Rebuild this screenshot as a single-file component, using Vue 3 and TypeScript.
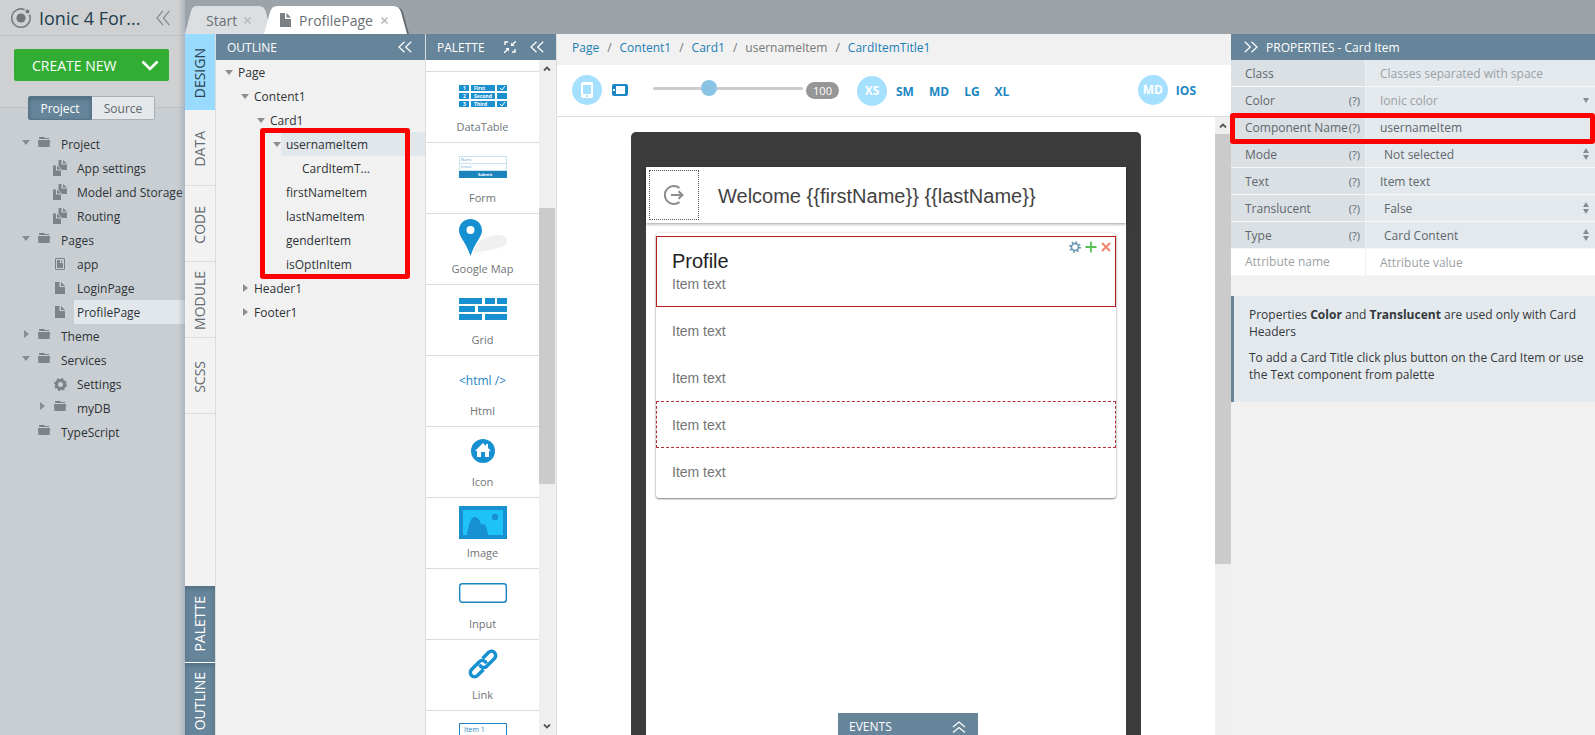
<script setup lang="ts">
import { ref } from 'vue'

interface TreeRow {
  label: string
  level: number
  arrow?: 'open' | 'closed'
  icon?: 'folder' | 'module' | 'app' | 'page' | 'gear'
  active?: boolean
}

interface Property {
  id: string
  label: string
  kind: 'text' | 'combo' | 'select'
  value?: string
  placeholder?: string
  help: boolean
  marked?: boolean
}

const mode = ref<'project' | 'source'>('project')
const zoom = ref(36)

const projectTree: TreeRow[] = [
  { label: 'Project', level: 0, arrow: 'open', icon: 'folder' },
  { label: 'App settings', level: 1, icon: 'module' },
  { label: 'Model and Storage', level: 1, icon: 'module' },
  { label: 'Routing', level: 1, icon: 'module' },
  { label: 'Pages', level: 0, arrow: 'open', icon: 'folder' },
  { label: 'app', level: 1, icon: 'app' },
  { label: 'LoginPage', level: 1, icon: 'page' },
  { label: 'ProfilePage', level: 1, icon: 'page', active: true },
  { label: 'Theme', level: 0, arrow: 'closed', icon: 'folder' },
  { label: 'Services', level: 0, arrow: 'open', icon: 'folder' },
  { label: 'Settings', level: 1, icon: 'gear' },
  { label: 'myDB', level: 1, arrow: 'closed', icon: 'folder' },
  { label: 'TypeScript', level: 0, icon: 'folder' },
]

const outlineTree: TreeRow[] = [
  { label: 'Page', level: 0, arrow: 'open' },
  { label: 'Content1', level: 1, arrow: 'open' },
  { label: 'Card1', level: 2, arrow: 'open' },
  { label: 'usernameItem', level: 3, arrow: 'open', active: true },
  { label: 'CardItemT...', level: 4 },
  { label: 'firstNameItem', level: 3 },
  { label: 'lastNameItem', level: 3 },
  { label: 'genderItem', level: 3 },
  { label: 'isOptInItem', level: 3 },
  { label: 'Header1', level: 1, arrow: 'closed' },
  { label: 'Footer1', level: 1, arrow: 'closed' },
]

const views = ['DESIGN', 'DATA', 'CODE', 'MODULE', 'SCSS']
const docks = ['PALETTE', 'OUTLINE']
const palette = ['DataTable', 'Form', 'Google Map', 'Grid', 'Html', 'Icon', 'Image', 'Input', 'Link', 'List']
const crumbs = ['Page', 'Content1', 'Card1', 'usernameItem', 'CardItemTitle1']
const sizes = ['XS', 'SM', 'MD', 'LG', 'XL']
const itemKinds = ['selected', '', '', 'hovered', '']

const properties: Property[] = [
  { id: 'class', label: 'Class', kind: 'text', placeholder: 'Classes separated with space', help: false },
  { id: 'color', label: 'Color', kind: 'combo', placeholder: 'Ionic color', help: true },
  { id: 'name', label: 'Component Name', kind: 'text', value: 'usernameItem', help: true, marked: true },
  { id: 'mode', label: 'Mode', kind: 'select', value: 'Not selected', help: true },
  { id: 'text', label: 'Text', kind: 'text', value: 'Item text', help: true },
  { id: 'translucent', label: 'Translucent', kind: 'select', value: 'False', help: true },
  { id: 'type', label: 'Type', kind: 'select', value: 'Card Content', help: true },
]
</script>

<template>
  <div class="ide">
    <aside class="sidebar">
      <header class="app-head">
        <svg class="logo" width="20" height="20" viewBox="0 0 20 20">
          <circle cx="10" cy="10" r="4.6" fill="#71767a" />
          <path d="M13.6 1.7A9.2 9.2 0 1 0 18.4 6.6" fill="none" stroke="#7a7f83" stroke-width="1.6" />
          <circle cx="16.4" cy="3.4" r="1.9" fill="#71767a" />
        </svg>
        <h1>Ionic 4 For...</h1>
        <button class="icon-btn" aria-label="Collapse project panel">
          <svg width="14" height="16" viewBox="0 0 14 16"><path d="M7 .8L1 8l6 7.200M13.400.8L7.400 8l6 7.200" fill="none" stroke="#85898c" stroke-width="1.200" /></svg>
        </button>
      </header>
      <div class="create-area">
        <button class="create">
          <span>CREATE NEW</span>
          <svg width="18" height="12" viewBox="0 0 18 12"><path d="M1.500 1.500L9 9l7.500-7.500" fill="none" stroke="#fff" stroke-width="2.600" /></svg>
        </button>
      </div>
      <div class="switch">
        <button :class="{ on: mode === 'project' }" @click="mode = 'project'">Project</button>
        <button :class="{ on: mode === 'source' }" @click="mode = 'source'">Source</button>
      </div>
      <ul class="tree project-tree">
        <li v-for="row in projectTree" :key="row.label" :class="'level-' + row.level">
          <span class="twisty">
            <svg v-if="row.arrow === 'open'" width="8" height="5" viewBox="0 0 8 5"><path d="M0 0h8L4 5z" fill="#888e93" /></svg>
            <svg v-else-if="row.arrow" width="5" height="8" viewBox="0 0 5 8"><path d="M0 0v8l5-4z" fill="#888e93" /></svg>
          </span>
          <span class="glyph">
            <svg v-if="row.icon === 'folder'" class="folder" width="12" height="10" viewBox="0 0 12 10"><path d="M1 1V0h5l1 1h4v1H1zM0 3h12v1l-.4 6H.4L0 4z" fill="#7d8388" /></svg>
            <svg v-else-if="row.icon === 'module'" width="15" height="16" viewBox="0 0 15 16"><path d="M0 5.500h3v5h5V16H0zM4 5.500L8 9.500H4zM5.500 0H8.500v4.500H14V10H9L5.500 6zM10 0l4 3.500h-4z" fill="#7d8388" /></svg>
            <svg v-else-if="row.icon === 'app'" width="10" height="12" viewBox="0 0 10 12"><path d="M.5.5h9v11h-9z" fill="none" stroke="#7d8388" /><path d="M2 2h3v3h3v5H2zM6 2l2 2H6z" fill="#7d8388" /></svg>
            <svg v-else-if="row.icon === 'page'" width="10" height="12" viewBox="0 0 10 12"><path d="M0 0h4.500v5H10v7H0zM6 0l4 4H6z" fill="#7d8388" /></svg>
            <svg v-else width="13" height="13" viewBox="0 0 13 13"><circle cx="6.500" cy="6.500" r="4" fill="none" stroke="#7d8388" stroke-width="3" /><circle cx="6.500" cy="6.500" r="5.600" fill="none" stroke="#7d8388" stroke-width="1.800" stroke-dasharray="2.200 2.200" /></svg>
          </span>
          <a href="#" class="node" :class="{ active: row.active }">{{ row.label }}</a>
        </li>
      </ul>
    </aside>

    <div class="workspace">
      <nav class="tabs">
        <div class="tab start">
          <svg class="shape" width="86" height="28" viewBox="0 0 86 28"><path d="M0 28L6 5Q7.500 0 12 0h62q5 0 7 6l5 22z" fill="#dbdfe2" /></svg>
          <span>Start</span><button class="close" aria-label="Close Start"><svg width="7" height="7" viewBox="0 0 7 7"><path d="M.5.5l6 6M6.500.5l-6 6" stroke="#b3b8bc" stroke-width="1.500" /></svg></button>
        </div>
        <div class="tab current">
          <svg class="shape" width="148" height="28" viewBox="0 0 148 28"><path d="M131 0q6 1 8 6l6 22h-2L131 2z" fill="#686d71" /><path d="M0 28L6 6Q8 0 13 0h117q5 0 7 6l6 22z" fill="#fff" /></svg>
          <svg width="11" height="14" viewBox="0 0 11 14"><path d="M0 0h5v6h6v8H0zM6.500 0L11 4.500H6.500z" fill="#7b8084" /></svg>
          <span>ProfilePage</span><button class="close" aria-label="Close ProfilePage"><svg width="7" height="7" viewBox="0 0 7 7"><path d="M.5.5l6 6M6.500.5l-6 6" stroke="#b3b8bc" stroke-width="1.500" /></svg></button>
        </div>
      </nav>

      <div class="panels">
        <nav class="rail">
          <button v-for="(view, i) in views" :key="view" :class="{ current: i === 0 }"><span>{{ view }}</span></button>
          <div class="docks">
            <button v-for="dock in docks" :key="dock" class="dock"><span>{{ dock }}</span></button>
          </div>
        </nav>

        <section class="outline">
          <header class="panel-head">
            <h2>OUTLINE</h2>
            <button class="icon-btn" aria-label="Collapse outline"><svg width="14" height="12" viewBox="0 0 14 12"><path d="M6.500.7L1 6l5.500 5.300M13.200.7L7.700 6l5.500 5.300" fill="none" stroke="#fff" stroke-width="1.200" /></svg></button>
          </header>
          <ul class="tree outline-tree">
            <li v-for="row in outlineTree" :key="row.label" :class="'level-' + row.level">
              <span class="twisty">
                <svg v-if="row.arrow === 'open'" width="8" height="5" viewBox="0 0 8 5"><path d="M0 0h8L4 5z" fill="#8b8f92" /></svg>
                <svg v-else-if="row.arrow" width="5" height="8" viewBox="0 0 5 8"><path d="M0 0v8l5-4z" fill="#8b8f92" /></svg>
              </span>
              <a href="#" class="node" :class="{ active: row.active }">{{ row.label }}</a>
            </li>
          </ul>
          <div class="callout"></div>
        </section>

        <section class="palette">
          <header class="panel-head">
            <h2>PALETTE</h2>
            <button class="icon-btn" aria-label="Compact view"><svg width="12" height="12" viewBox="0 0 12 12"><path d="M1 4V1h3M8 11h3V8" fill="none" stroke="#fff" stroke-width="1.400" /><path d="M0 12l4-4M12 0L8 4" stroke="#fff" stroke-width="1.400" /><path d="M1.500 7H5v3.500zM7 1.500V5h3.500z" fill="#fff" /></svg></button>
            <button class="icon-btn" aria-label="Collapse palette"><svg width="14" height="12" viewBox="0 0 14 12"><path d="M6.500.7L1 6l5.500 5.300M13.200.7L7.700 6l5.500 5.300" fill="none" stroke="#fff" stroke-width="1.200" /></svg></button>
          </header>
          <div class="palette-body">
            <ul class="palette-list">
              <li v-for="name in palette" :key="name">
                <svg v-if="name === 'DataTable'" width="48" height="48" viewBox="0 0 48 48">
                  <path d="M0 13h10v6H0zm12 0h24v6H12zm26 0h10v6H38zM0 21h10v6H0zm12 0h24v6H12zm26 0h10v6H38zM0 29h10v6H0zm12 0h24v6H12zm26 0h10v6H38z" fill="#1b90cf" />
                  <g fill="#fff" font-size="5" font-weight="700"><text x="4" y="18">1</text><text x="4" y="26">2</text><text x="4" y="34">3</text><text x="15" y="18">First</text><text x="15" y="26">Second</text><text x="15" y="34">Third</text></g>
                  <path d="M41 16l2 2 3-4M41 32l2 2 3-4" fill="none" stroke="#fff" />
                </svg>
                <svg v-else-if="name === 'Form'" width="48" height="48" viewBox="0 0 48 48">
                  <path d="M.5 13.500h47v14H.5zM0 20.500h48" fill="none" stroke="#c5e2f2" /><path d="M0 28h48v7H0z" fill="#1b84bd" />
                  <g fill="#6caed3" font-size="4"><text x="2" y="18">Name</text><text x="2" y="25">Email</text></g><text x="19" y="33" fill="#fff" font-size="4" font-weight="700">Submit</text>
                </svg>
                <svg v-else-if="name === 'Google Map'" width="48" height="48" viewBox="0 0 48 48">
                  <path d="M14 39q4-15 22-18c8-1 12 2 12 6 0 5-5 7-12 8z" fill="#f0f0f0" /><path d="M11.500 5C5 5 0 10 0 16.500 0 23 7 28 11.500 42 16 28 23 23 23 16.500 23 10 18 5 11.500 5zm0 7a4 4 0 1 1 0 8 4 4 0 0 1 0-8z" fill="#1790d2" />
                </svg>
                <svg v-else-if="name === 'Grid'" width="48" height="48" viewBox="0 0 48 48"><path d="M0 13h23v6H0zm26 0h10v6H26zm12 0h10v6H38zM0 21h16v6H0zm19 0h29v6H19zM0 29h23v6H0zm26 0h22v6H26z" fill="#1790d2" /></svg>
                <span v-else-if="name === 'Html'" class="html-mark">&lt;html /&gt;</span>
                <svg v-else-if="name === 'Icon'" width="48" height="48" viewBox="0 0 48 48"><circle cx="24" cy="24" r="12" fill="#1790d2" /><path d="M24 16l-8 8h2v6h4v-5h4v5h4v-6h2l-3-3v-4h-2v2z" fill="#fff" /></svg>
                <svg v-else-if="name === 'Image'" width="48" height="48" viewBox="0 0 48 48"><path d="M0 8h48v33H0z" fill="#1790d2" /><path d="M4 12h40v25H4z" fill="#1fc2f7" /><path d="M8 37c2-12 4-18 8-18 3 0 5 3 6 8 3-3 6 0 7 10z" fill="#1790d2" /><circle cx="36" cy="19" r="3.200" fill="#1790d2" /></svg>
                <svg v-else-if="name === 'Input'" width="48" height="48" viewBox="0 0 48 48"><rect x=".7" y="14.700" width="46.600" height="18.600" rx="2.500" fill="none" stroke="#1b84c2" stroke-width="1.400" /></svg>
                <svg v-else-if="name === 'Link'" width="48" height="48" viewBox="0 0 48 48"><g fill="none" stroke="#1790d2" stroke-width="3.400" transform="rotate(-45 24 24)"><path d="M20.500 28.200H12a4.200 4.200 0 0 1 0-8.400H23a4.200 4.200 0 0 1 3.800 6.200" /><path d="M27.500 19.800h8.500a4.200 4.200 0 0 1 0 8.400H25a4.200 4.200 0 0 1-3.800-6.200" /></g></svg>
                <svg v-else width="48" height="48" viewBox="0 0 48 48"><path d="M.5 12.500h47v35H.5zM0 24.500h48" fill="none" stroke="#1b84c2" /><text x="5" y="21" fill="#1b84c2" font-size="7">Item 1</text></svg>
                <span class="palette-name">{{ name }}</span>
              </li>
            </ul>
            <div class="scrollbar palette-scroll">
              <svg width="8" height="5" viewBox="0 0 8 5"><path d="M1 4.500l3-3 3 3" fill="none" stroke="#555" stroke-width="1.800" /></svg>
              <div class="track"><i></i></div>
              <svg width="8" height="5" viewBox="0 0 8 5"><path d="M1 .5l3 3 3-3" fill="none" stroke="#555" stroke-width="1.800" /></svg>
            </div>
          </div>
        </section>

        <main class="canvas">
          <nav class="crumbs">
            <template v-for="(crumb, i) in crumbs" :key="crumb">
              <span v-if="i > 0" class="sep">/</span>
              <span v-if="crumb === 'usernameItem'" class="here">{{ crumb }}</span>
              <a v-else href="#">{{ crumb }}</a>
            </template>
          </nav>
          <div class="toolbar">
            <button class="round" aria-label="Portrait"><svg width="12" height="16" viewBox="0 0 12 16"><path d="M2 0h8q2 0 2 2v12q0 2-2 2H2q-2 0-2-2V2q0-2 2-2zm0 3v9h8V3zM5 13v2h2v-2z" fill="#fff" fill-rule="evenodd" /></svg></button>
            <button class="icon-btn landscape" aria-label="Landscape"><svg width="16" height="12" viewBox="0 0 16 12"><path d="M2 0h12q2 0 2 2v8q0 2-2 2H2q-2 0-2-2V2q0-2 2-2zm2 2v8h9V2zM1 5v2h2V5z" fill="#1b86c6" fill-rule="evenodd" /></svg></button>
            <input v-model="zoom" class="zoom" type="range" min="0" max="100" aria-label="Zoom" />
            <span class="badge">100</span>
            <div class="sizes">
              <button v-for="(size, i) in sizes" :key="size" :class="i === 0 ? 'round' : 'plain'">{{ size }}</button>
            </div>
            <div class="platforms">
              <button class="round">MD</button><button class="plain">IOS</button>
            </div>
          </div>
          <div class="stage">
            <div class="viewport">
              <div class="device">
                <div class="screen">
                  <header class="page-head">
                    <button class="logout" aria-label="Log out"><svg width="20" height="20" viewBox="0 0 20 20"><path d="M15.500 3A9 9 0 1 0 15.500 17M7 10h11M14.500 6.300L18.500 10l-4 3.700" fill="none" stroke="#8c8c8c" stroke-width="2" /></svg></button>
                    <h3 v-pre>Welcome {{firstName}} {{lastName}}</h3>
                  </header>
                  <div class="card">
                    <div v-for="(kind, i) in itemKinds" :key="i" class="item" :class="kind">
                      <h4 v-if="i === 0">Profile</h4>
                      <p>Item text</p>
                      <div v-if="i === 0" class="item-tools">
                        <button class="icon-btn" aria-label="Settings"><svg width="12" height="12" viewBox="0 0 12 12"><circle cx="6" cy="6" r="3.500" fill="none" stroke="#5f8fae" stroke-width="1.500" /><circle cx="6" cy="6" r="5" fill="none" stroke="#5f8fae" stroke-width="1.800" stroke-dasharray="1.500 2.430" /></svg></button>
                        <button class="icon-btn" aria-label="Add"><svg width="12" height="12" viewBox="0 0 12 12"><path d="M6 .5v11M.5 6h11" stroke="#55c155" stroke-width="1.800" /></svg></button>
                        <button class="icon-btn" aria-label="Remove"><svg width="10" height="10" viewBox="0 0 10 10"><path d="M1 1l8 8M9 1L1 9" stroke="#f0866b" stroke-width="2" /></svg></button>
                      </div>
                    </div>
                  </div>
                </div>
              </div>
            </div>
            <div class="scrollbar stage-scroll">
              <svg width="8" height="5" viewBox="0 0 8 5"><path d="M1 4.500l3-3 3 3" fill="none" stroke="#555" stroke-width="1.800" /></svg>
              <div class="track"><i></i></div>
            </div>
          </div>
          <button class="events"><span>EVENTS</span><svg width="14" height="12" viewBox="0 0 14 12"><path d="M1 6l6-5 6 5M1 11.500l6-5 6 5" fill="none" stroke="#fff" stroke-width="1.200" /></svg></button>
        </main>

        <section class="properties">
          <header class="panel-head">
            <button class="icon-btn" aria-label="Collapse properties"><svg width="14" height="12" viewBox="0 0 14 12"><path d="M.8.7L6.300 6 .8 11.300M7.500.7L13 6l-5.500 5.300" fill="none" stroke="#fff" stroke-width="1.200" /></svg></button>
            <h2>PROPERTIES - Card Item</h2>
          </header>
          <div v-for="prop in properties" :key="prop.id" class="prop" :class="{ marked: prop.marked }">
            <div class="key"><label :for="prop.id">{{ prop.label }}</label><span v-if="prop.help" class="help">(?)</span></div>
            <div class="value">
              <select v-if="prop.kind === 'select'" :id="prop.id"><option>{{ prop.value }}</option></select>
              <input v-else :id="prop.id" type="text" :value="prop.value" :placeholder="prop.placeholder" />
              <svg v-if="prop.kind === 'select'" width="6" height="12" viewBox="0 0 6 12"><path d="M3 0l3 5H0zM0 7h6l-3 5z" fill="#868b8f" /></svg>
              <svg v-else-if="prop.kind === 'combo'" width="6" height="5" viewBox="0 0 6 5"><path d="M0 0h6L3 5z" fill="#868b8f" /></svg>
            </div>
          </div>
          <div class="prop blank">
            <div class="key"><input type="text" placeholder="Attribute name" aria-label="Attribute name" /></div>
            <div class="value"><input type="text" placeholder="Attribute value" aria-label="Attribute value" /></div>
          </div>
          <div class="note">
            <p>Properties <b>Color</b> and <b>Translucent</b> are used only with Card Headers</p>
            <p>To add a Card Title click plus button on the Card Item or use the Text component from palette</p>
          </div>
        </section>
      </div>
    </div>
  </div>
</template>

<style>
body { margin: 0; overflow: hidden; }
</style>

<style scoped>
.ide { display: flex; height: 100vh; overflow: hidden; font: 12px/16px "Open Sans", "Noto Sans", sans-serif; color: #2d3236; background: #f1f1f1; }
.ide * { box-sizing: border-box; }
h1, h2, h3, h4, p, ul { margin: 0; padding: 0; font-weight: 400; }
ul { list-style: none; }
svg { display: block; flex: none; }
button, input, select { font: inherit; color: inherit; margin: 0; padding: 0; border: 0; background: none; border-radius: 0; outline: 0; }
a { text-decoration: none; color: inherit; }
.icon-btn { display: flex; flex: none; }

.sidebar { flex: 0 0 185px; position: relative; overflow: hidden; background: #c9ced2; }
.sidebar::after { content: ""; position: absolute; inset: 0 0 0 auto; width: 7px; background: linear-gradient(90deg, transparent, #8d9eaf80); pointer-events: none; }
.app-head { display: flex; align-items: center; height: 36px; padding: 0 15px 0 11px; background: #cfd0d1; border-bottom: 1px solid #bfc2c4; }
.app-head h1 { flex: 1; margin-left: 8px; padding-top: 1px; font-size: 18px; line-height: 24px; color: #223e4d; }
.create-area { height: 72px; padding: 13px 16px 0 14px; background: #cfd0d1; border-bottom: 1px solid #bcc1c5; }
.create { display: flex; align-items: center; justify-content: space-between; width: 100%; height: 32px; padding: 2px 10px 0 18px; background: #31ad33; border-radius: 2px; color: #fff; font-size: 14px; }
.switch { display: flex; position: relative; z-index: 1; width: 127px; height: 24px; margin: -12px 0 0 28px; }
.switch button { flex: 1; padding-top: 1px; background: #e4e8eb; border: 1px solid #a9b0b5; border-left: 0; border-radius: 0 2px 2px 0; color: #5e666c; }
.switch button.on { background: #66859a; border: 1px solid #587489; border-radius: 2px 0 0 2px; color: #fff; box-shadow: inset 0 2px 4px #4d6a7e; }

.tree li { display: flex; align-items: center; height: 24px; }
.twisty { display: flex; justify-content: center; flex: 0 0 8px; }
.node { flex: 1; height: 24px; line-height: 26px; padding-left: 5px; white-space: nowrap; }
.node.active { background: #e1e7eb; }
.level-1 { padding-left: 16px; }
.level-2 { padding-left: 32px; }
.level-3 { padding-left: 48px; }
.level-4 { padding-left: 64px; }
.project-tree { margin-top: 12px; padding-left: 22px; }
.project-tree .twisty { padding-bottom: 4px; }
.project-tree .glyph { display: flex; justify-content: center; flex: 0 0 28px; }
.project-tree .folder { margin-bottom: 4px; }
.project-tree .node { padding-left: 3px; }
.outline-tree { padding-left: 9px; }

.workspace { flex: 1; min-width: 0; display: flex; flex-direction: column; }
.tabs { display: flex; flex: 0 0 34px; padding-top: 6px; background: #9ca4aa; }
.tab { position: relative; display: flex; align-items: center; height: 28px; font-size: 14px; color: #697075; }
.tab > * { position: relative; }
.tab span { padding-top: 1px; }
.tab .shape { position: absolute; top: 0; left: 0; }
.close { display: flex; }
.start { width: 79px; padding-left: 21px; gap: 7px; }
.tab.current { width: 148px; padding-left: 16px; gap: 8px; }

.panels { flex: 1; display: flex; min-height: 0; }
.rail { flex: 0 0 31px; display: flex; flex-direction: column; background: #f2f2f2; border-right: 1px solid #dcdcdc; }
.rail button { display: flex; align-items: center; justify-content: center; width: 30px; height: 76px; padding-top: 2px; border-bottom: 1px solid #dcdcdc; font-size: 14px; color: #666c70; }
.rail span { writing-mode: vertical-rl; transform: rotate(180deg); }
.rail button.current { background: #98dbff; color: #2d4450; border: 0; }
.docks { margin: auto 0 -5px; }
.rail .dock { height: 77px; padding: 0; background: #66859a; border-bottom: 1px solid #fff; color: #fff; box-shadow: inset 0 2px 5px #526d7f; }

.panel-head { display: flex; align-items: center; height: 26px; background: #66859a; color: #fff; }
.panel-head h2 { height: 26px; font-size: 12px; line-height: 28px; }
.outline { position: relative; flex: 0 0 210px; border-right: 1px solid #dcdcdc; }
.outline .panel-head { justify-content: space-between; padding: 0 13px 0 11px; }
.callout { position: absolute; left: 44px; top: 94px; width: 150px; height: 151px; border: 5px solid #fd0000; border-radius: 3px; }

.palette { flex: 0 0 131px; display: flex; flex-direction: column; min-height: 0; border-right: 1px solid #dcdcdc; background: #fff; }
.palette .panel-head { flex: none; padding: 0 12px 0 11px; }
.palette h2 { flex: 1; }
.palette .icon-btn { margin-left: 14px; }
.palette-body { flex: 1; min-height: 0; display: flex; overflow: hidden; }
.palette-list { flex: 1; padding-top: 11px; }
.palette-list li { display: flex; flex-direction: column; align-items: center; height: 71px; border-top: 1px solid #dcdcdc; color: #707477; font-size: 11px; }
.palette-name { line-height: 14px; }
.html-mark { height: 48px; line-height: 50px; font-size: 12px; color: #1b84c2; }
.scrollbar { display: flex; flex-direction: column; align-items: center; flex: 0 0 16px; background: #efefef; padding: 6px 0; }
.palette-scroll { flex-basis: 17px; padding-right: 1px; }
.track { flex: 1; width: 16px; padding-top: 137px; }
.track i { display: block; height: 276px; background: #cbcbcb; }

.canvas { position: relative; flex: 1; min-width: 0; display: flex; flex-direction: column; background: #fff; }
.crumbs { display: flex; flex: 0 0 31px; gap: 8px; padding: 6px 15px; background: #f1f1f1; color: #777; }
.crumbs a { color: #1c7db5; }
.toolbar { display: flex; align-items: center; flex: 0 0 52px; padding: 0 35px 0 15px; border-bottom: 1px solid #dcdcdc; color: #1b86c2; font-weight: 700; }
.toolbar > .round, .landscape, .platforms { margin-bottom: 2px; }
.round { display: flex; align-items: center; justify-content: center; width: 30px; height: 30px; padding-top: 1px; border-radius: 50%; background: #a6e0ff; color: #fff; }
.plain { padding-top: 2px; }
.landscape { margin-left: 10px; }
.zoom { appearance: none; width: 150px; height: 16px; margin: 0 3px 4px 25px; }
.zoom::-webkit-slider-runnable-track { height: 3px; border-radius: 2px; background: #cacdd0; }
.zoom::-webkit-slider-thumb { appearance: none; width: 16px; height: 16px; margin-top: -7px; border-radius: 50%; background: #8bc3e3; }
.badge { width: 33px; height: 17px; border-radius: 9px; background: #969696; color: #fff; font-size: 11px; line-height: 18px; font-weight: 400; text-align: center; }
.sizes { display: flex; align-items: center; gap: 15px; margin-left: 18px; }
.sizes .round { margin-right: -6px; }
.platforms { display: flex; align-items: center; gap: 8px; margin-left: auto; }

.stage { flex: 1; min-height: 0; display: flex; }
.viewport { flex: 1; min-width: 0; overflow: hidden; padding-top: 15px; }
.stage-scroll .track { padding-top: 6px; }
.stage-scroll .track i { height: 430px; }
.device { width: 510px; height: 100%; margin: 0 auto; padding: 35px 15px 0; background: #3b3b3b; border-radius: 5px 5px 0 0; }
.screen { height: 100%; background: #fff; font-family: "Liberation Sans", Arial, sans-serif; }
.page-head { display: flex; align-items: center; height: 56px; padding-left: 3px; box-shadow: 0 1px 3px #0006; }
.logout { display: flex; align-items: center; justify-content: center; width: 50px; height: 50px; border: 1px dotted #555; }
.page-head h3 { margin-left: 19px; padding-top: 2px; font-size: 20px; line-height: 24px; color: #424242; }
.card { margin: 10px 10px 0; padding: 3px 0; border-radius: 3px; box-shadow: 0 1px 2px #0007, 0 0 3px #0002; color: #757575; font-size: 14px; }
.item { position: relative; height: 47px; padding: 15px; border: 1px solid transparent; }
.item h4 { font-size: 20px; line-height: 24px; color: #222; }
.item.selected { height: 71px; padding-top: 12px; border-color: #b81c1c; }
.item.selected p { line-height: 22px; }
.item.hovered { border: 1px dashed #b5303a; }
.item-tools { position: absolute; top: 4px; right: 4px; display: flex; align-items: center; gap: 4px; }
.events { position: absolute; bottom: 0; left: calc(50% - 56px); display: flex; align-items: center; justify-content: space-between; width: 140px; height: 22px; padding: 5px 12px 0 11px; background: #66859a; color: #fff; }

.properties { flex: 0 0 364px; background: #f1f1f1; color: #5e676d; }
.properties .panel-head { gap: 8px; padding-left: 13px; }
.prop { position: relative; display: grid; grid-template-columns: 135px 1fr; height: 27px; border-bottom: 1px solid #f4f6f7; }
.key { display: flex; align-items: center; justify-content: space-between; padding: 2px 5px 0 14px; background: #dbe0e4; border-right: 1px solid #edf0f2; white-space: nowrap; }
.help { font-size: 11px; }
.value { display: flex; align-items: center; padding: 0 6px 0 14px; background: #e4e9ed; }
.value input, .value select { flex: 1; min-width: 0; height: 26px; }
.value select { appearance: none; padding: 2px 0 0 4px; }
.key input { width: 100%; }
.properties input::placeholder { color: #9ba1a5; opacity: 1; }
.prop.blank > div { padding-top: 0; background: #fff; }
.prop.marked::after { content: ""; position: absolute; inset: -1px 0 -4px -1px; border: 5px solid #fd0000; border-radius: 3px; z-index: 1; pointer-events: none; }
.note { margin-top: 20px; height: 106px; padding: 10px 10px 0 15px; border-left: 3px solid #66859a; background: #e4e9ed; color: #33383b; line-height: 17px; }
.note p + p { margin-top: 9px; }
</style>
